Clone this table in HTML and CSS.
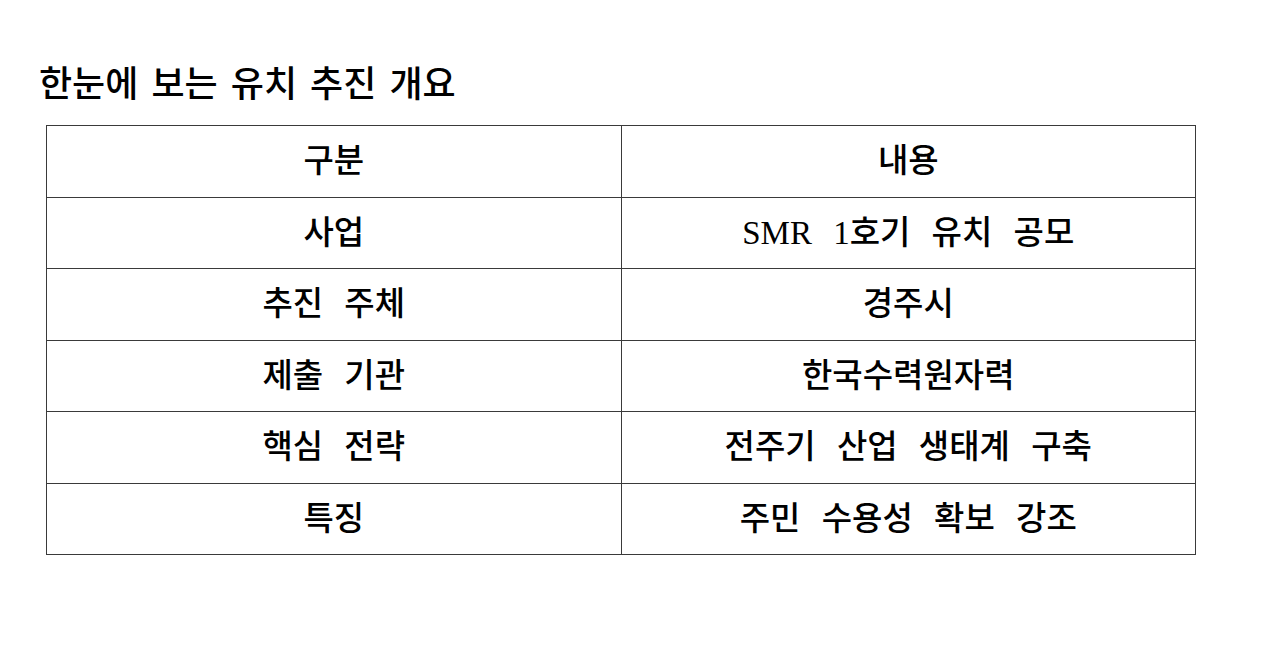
FILE: index.html
```html
<!DOCTYPE html>
<html lang="ko">
<head>
<meta charset="utf-8">
<link rel="stylesheet" href="styles.css">
</head>
<body>
<main class="page">
  <h1 class="title">한눈에 보는 유치 추진 개요</h1>
  <table class="summary">
    <tr><td>구분</td><td>내용</td></tr>
    <tr><td>사업</td><td>SMR 1호기 유치 공모</td></tr>
    <tr><td>추진 주체</td><td>경주시</td></tr>
    <tr><td>제출 기관</td><td>한국수력원자력</td></tr>
    <tr><td>핵심 전략</td><td>전주기 산업 생태계 구축</td></tr>
    <tr><td>특징</td><td>주민 수용성 확보 강조</td></tr>
  </table>
</main>
</body>
</html>
```

FILE: styles.css
```css
html, body {
  margin: 0;
  padding: 0;
  background: #ffffff;
}
.page {
  padding: 60px 0 0 46px;
  font-family: "Liberation Serif", "Noto Sans CJK KR", serif;
  color: #000;
}
.title {
  margin: 0 0 23px -7px;
  font-family: "Noto Sans CJK KR", sans-serif;
  font-size: 36px;
  font-weight: 500;
  line-height: 42px;
  word-spacing: 3px;
}
.summary {
  border-collapse: collapse;
  width: 1150px;
  table-layout: fixed;
}
.summary td {
  border: 1px solid #3a3a3a;
  height: 70.5px;
  padding: 0;
  text-align: center;
  vertical-align: middle;
  font-size: 33px;
  font-weight: 500;
  line-height: 40px;
  word-spacing: 13px;
}
```
